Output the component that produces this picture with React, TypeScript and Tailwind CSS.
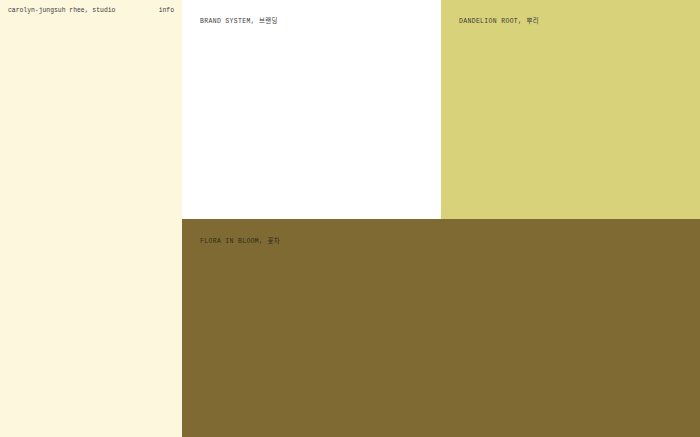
const PANELS = [
  { title: "BRAND SYSTEM, 브랜딩", bg: "bg-white" },
  { title: "DANDELION ROOT, 뿌리", bg: "bg-[#d8d27a]" },
];

const mono = "font-['Liberation_Mono','Noto_Sans_CJK_KR',monospace]";

export default function App() {
  return (
    <div className={`flex h-[437px] w-[700px] overflow-hidden text-[#3a3a3a] ${mono}`}>
      <aside className="flex w-[182px] shrink-0 items-start justify-between bg-[#fdf7de] px-2 pt-[7px] text-[6.4px] leading-[8px]">
        <span>carolyn-jungsuh rhee, studio</span>
        <span>info</span>
      </aside>

      <main className="grid flex-1 grid-cols-2 grid-rows-2">
        {PANELS.map((p) => (
          <section key={p.title} className={`${p.bg} px-[18px] pt-[18px] text-[6.4px] leading-[8px] tracking-[0.06em]`}>
            {p.title}
          </section>
        ))}
        <section className="col-span-2 bg-[#7f6a33] px-[18px] pt-[19px] text-[6.4px] leading-[8px] tracking-[0.06em] text-[#2e2a1c]">
          FLORA IN BLOOM, 꽃차
        </section>
      </main>
    </div>
  );
}
